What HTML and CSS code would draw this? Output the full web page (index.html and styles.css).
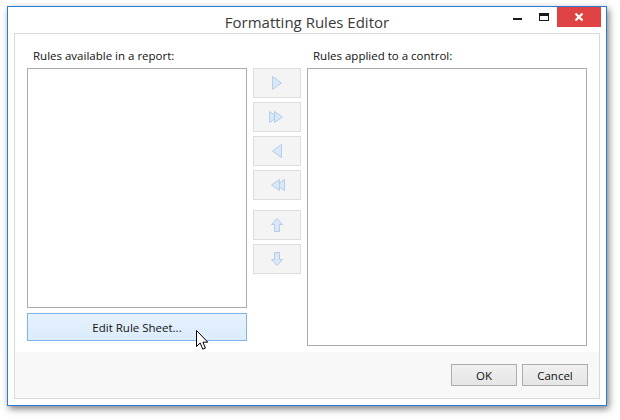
FILE: index.html
```html
<!DOCTYPE html>
<html>
<head>
<meta charset="utf-8">
<link rel="stylesheet" href="styles.css">
</head>
<body>
<div class="window">
  <div class="titlebar">
    <div></div>
    <div class="title">Formatting Rules Editor</div>
    <div class="controls">
      <div class="ctl"><span class="min-icon"></span></div>
      <div class="ctl"><span class="max-icon"></span></div>
      <div class="ctl close">
        <svg width="10" height="10" viewBox="0 0 10 10"><path d="M1.5 1.5 L8.5 8.5 M8.5 1.5 L1.5 8.5" stroke="#fff" stroke-width="2.2" fill="none"/></svg>
      </div>
    </div>
  </div>
  <div class="panel">
    <div class="content">
      <div class="col col-left">
        <div class="label">Rules available in a report:</div>
        <div class="listbox list-left"></div>
        <div class="btn btn-sheet">Edit Rule Sheet...</div>
      </div>
      <div class="mid">
        <div class="mbtn">
          <svg width="12" height="16" viewBox="0 0 12 16"><path d="M1.5 1.5 L10.5 8 L1.5 14.5 Z" class="arr"/></svg>
        </div>
        <div class="mbtn">
          <svg width="18" height="14" viewBox="0 0 18 14"><path d="M1.5 1.5 L9.5 7 L1.5 12.5 Z" class="arr"/><path d="M6.5 1.5 L14.5 7 L6.5 12.5 Z" class="arr"/></svg>
        </div>
        <div class="mbtn">
          <svg width="12" height="16" viewBox="0 0 12 16"><path d="M10.5 1.5 L1.5 8 L10.5 14.5 Z" class="arr"/></svg>
        </div>
        <div class="mbtn">
          <svg width="18" height="14" viewBox="0 0 18 14"><path d="M16.5 1.5 L8.5 7 L16.5 12.5 Z" class="arr"/><path d="M11.5 1.5 L3.5 7 L11.5 12.5 Z" class="arr"/></svg>
        </div>
        <div class="mbtn sep">
          <svg width="14" height="16" viewBox="0 0 14 16"><path d="M7 1.5 L12.5 7.5 L9.5 7.5 L9.5 14.5 L4.5 14.5 L4.5 7.5 L1.5 7.5 Z" class="arr"/></svg>
        </div>
        <div class="mbtn">
          <svg width="14" height="16" viewBox="0 0 14 16"><path d="M7 14.5 L12.5 8.5 L9.5 8.5 L9.5 1.5 L4.5 1.5 L4.5 8.5 L1.5 8.5 Z" class="arr"/></svg>
        </div>
      </div>
      <div class="col col-right">
        <div class="label">Rules applied to a control:</div>
        <div class="listbox list-right"></div>
      </div>
    </div>
    <div class="footer">
      <div class="btn btn-foot">OK</div>
      <div class="btn btn-foot">Cancel</div>
    </div>
  </div>
</div>
<svg class="cursor" width="14" height="21" viewBox="0 0 14 21"><path d="M0.5 0.5 L0.5 16.5 L4.2 13 L6.8 19.2 L9.4 18.1 L6.9 12.2 L11.8 12.2 Z" fill="#fff" stroke="#000" stroke-width="1" stroke-linejoin="miter"/></svg>
</body>
</html>
```
FILE: styles.css
```css
html, body {
  margin: 0;
  padding: 0;
  background: #ffffff;
}
body {
  width: 620px;
  height: 420px;
  position: relative;
  font-family: "Open Sans", "Noto Sans", "DejaVu Sans", sans-serif;
  color: #1e1e1e;
}
.window {
  position: absolute;
  left: 7px;
  top: 6px;
  width: 598px;
  height: 398px;
  border: 1px solid #2b7bd0;
  background: #ffffff;
  box-shadow: 2px 3px 7px rgba(0, 0, 0, 0.5);
  display: flex;
  flex-direction: column;
}
.titlebar {
  height: 26px;
  display: grid;
  grid-template-columns: 1fr auto 1fr;
}
.title {
  font-size: 15px;
  line-height: 22px;
  padding-top: 4px;
  color: #3a3a3a;
  white-space: nowrap;
}
.controls {
  display: flex;
  justify-content: flex-end;
  align-items: flex-start;
  padding-right: 5px;
}
.ctl {
  width: 26px;
  height: 20px;
  position: relative;
}
.min-icon {
  position: absolute;
  left: 8px;
  top: 11px;
  width: 9px;
  height: 2px;
  background: #1a1a1a;
}
.max-icon {
  position: absolute;
  left: 8px;
  top: 6px;
  width: 8px;
  height: 4px;
  border: 1px solid #1a1a1a;
  border-top-width: 3px;
}
.ctl.close {
  width: 44px;
  background: #e04343;
  display: flex;
  align-items: center;
  justify-content: center;
}
.panel {
  margin: 0 6px 6px;
  border: 1px solid #d9d9d9;
  flex: 1;
  display: flex;
  flex-direction: column;
}
.content {
  flex: 1;
  display: flex;
  gap: 6px;
  padding: 14px 12px 0;
  background: #ffffff;
}
.col {
  display: flex;
  flex-direction: column;
}
.col-left { width: 220px; }
.col-right { width: 280px; }
.label {
  font-size: 11.5px;
  line-height: 16px;
  height: 16px;
  padding-left: 6px;
  margin-bottom: 4px;
  white-space: nowrap;
  color: #111111;
}
.listbox {
  box-sizing: border-box;
  border: 1px solid #ababab;
  background: #ffffff;
}
.list-left { height: 240px; }
.list-right { height: 278px; }
.btn {
  box-sizing: border-box;
  display: flex;
  align-items: center;
  justify-content: center;
  font-size: 11.5px;
  color: #111111;
}
.btn-sheet {
  margin-top: 5px;
  height: 28px;
  border: 1px solid #7eb4ea;
  background: linear-gradient(#e6f1fc, #dcecfc);
}
.mid {
  width: 48px;
  padding-top: 20px;
  display: flex;
  flex-direction: column;
  gap: 4px;
}
.mbtn {
  box-sizing: border-box;
  height: 30px;
  border: 1px solid #dedede;
  background: #f4f4f4;
  display: flex;
  align-items: center;
  justify-content: center;
}
.mbtn.sep { margin-top: 6px; }
.arr {
  fill: #d9e7f7;
  stroke: #b3cdea;
  stroke-width: 1;
  stroke-linejoin: round;
}
.footer {
  height: 46px;
  background: #f8f8f8;
  display: flex;
  justify-content: flex-end;
  align-items: flex-start;
  gap: 5px;
  padding: 12px 11px 0 0;
  box-sizing: border-box;
}
.btn-foot {
  width: 66px;
  height: 22px;
  border: 1px solid #adadad;
  background: linear-gradient(#f0f0f0, #e5e5e5);
}
.cursor {
  position: absolute;
  left: 196px;
  top: 330px;
}
```
